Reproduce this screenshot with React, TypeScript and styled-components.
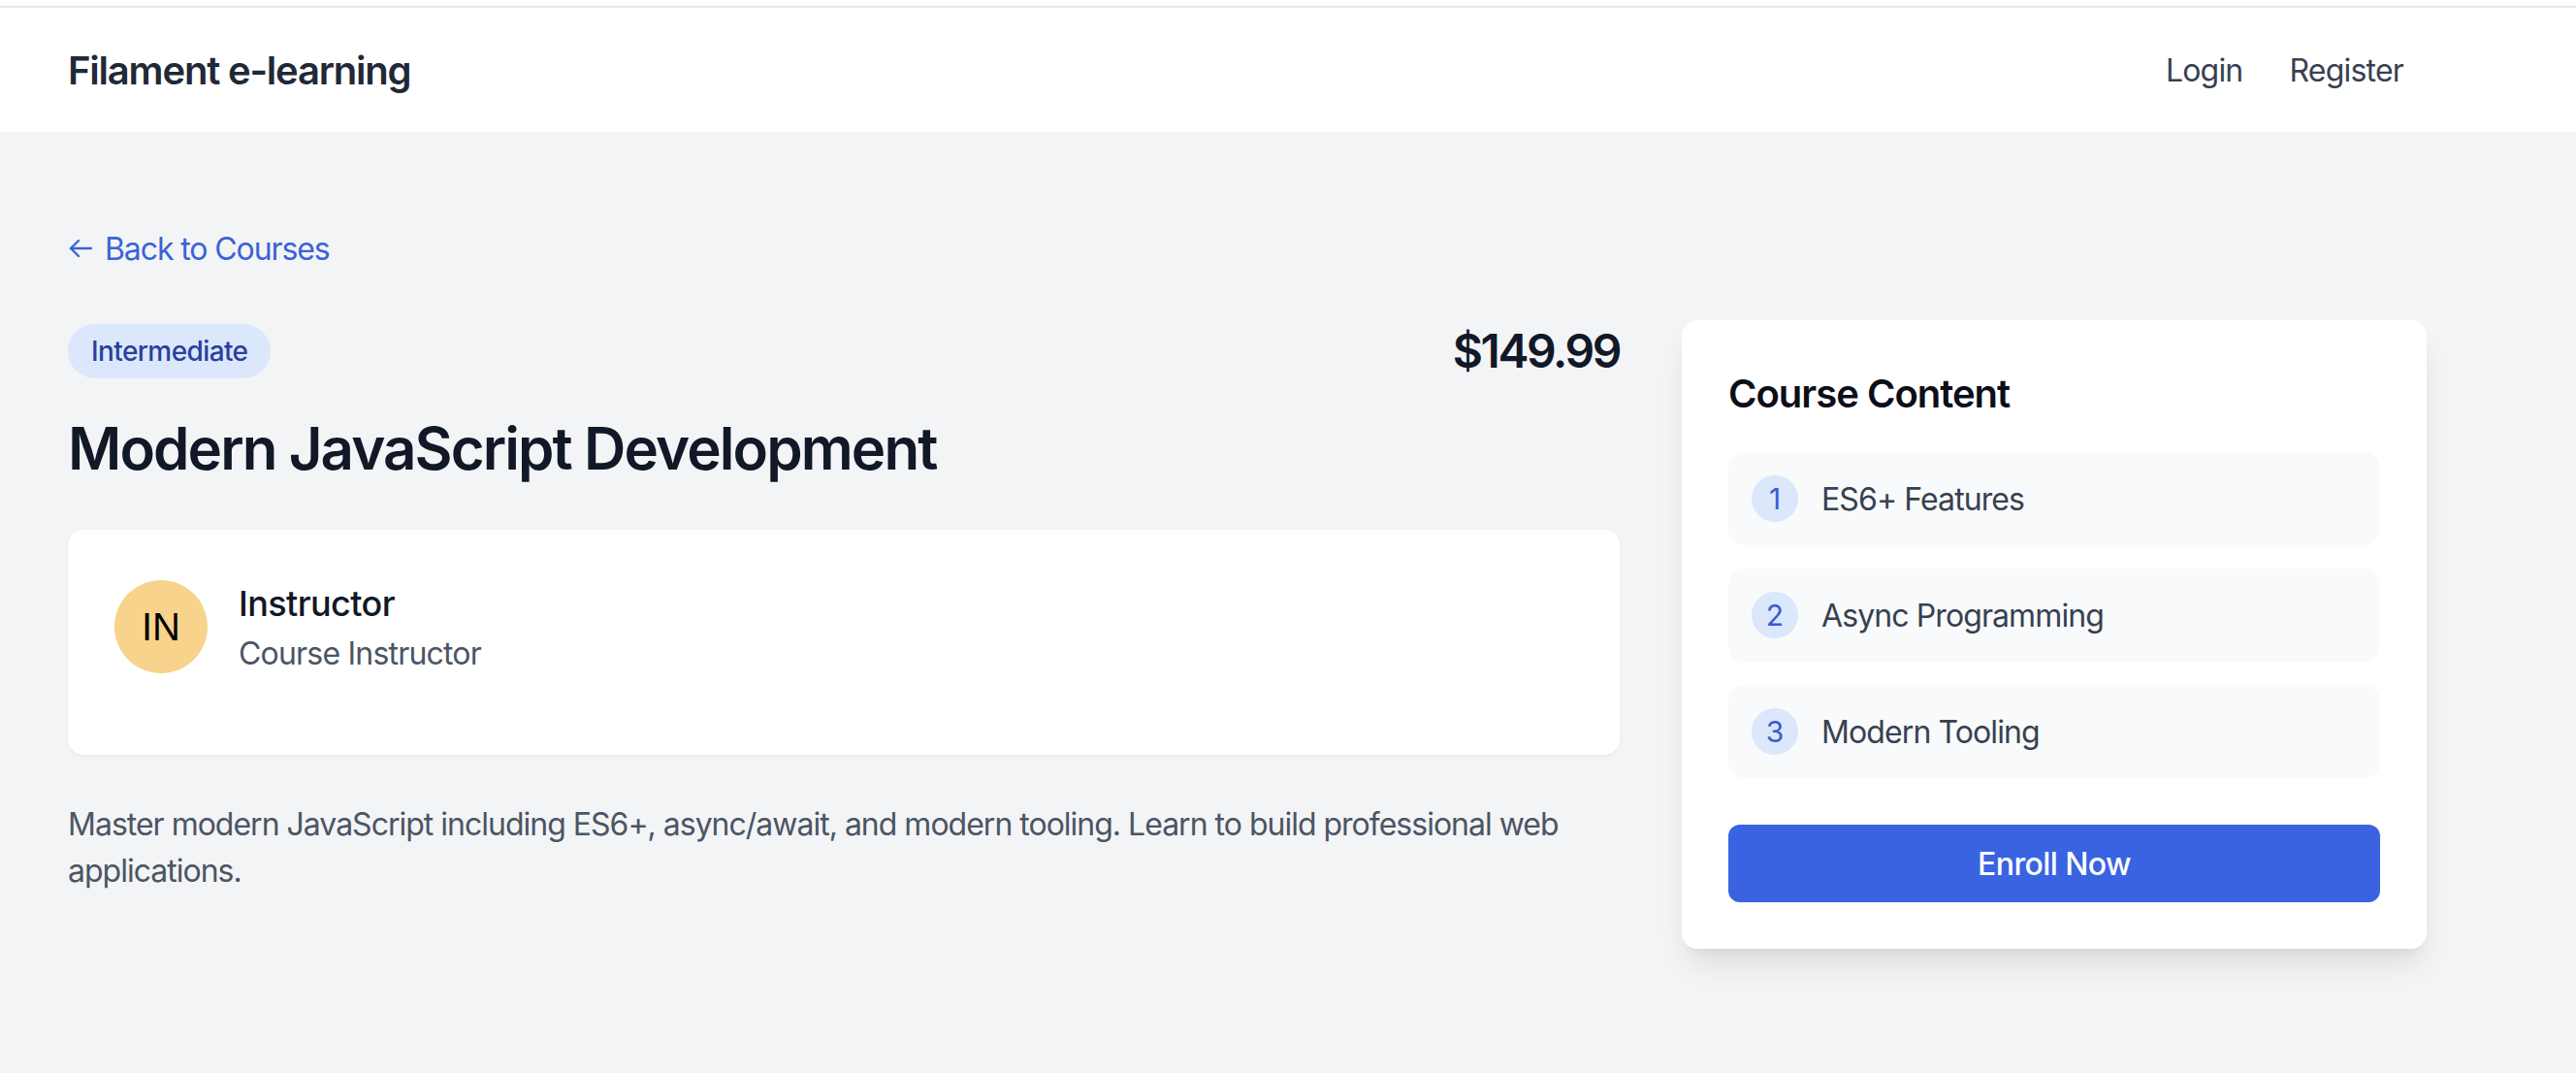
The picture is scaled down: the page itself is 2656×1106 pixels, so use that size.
import React from "react";
import styled, { createGlobalStyle } from "styled-components";

const GlobalStyle = createGlobalStyle`
  * { box-sizing: border-box; }
  html, body { margin: 0; padding: 0; }
  body {
    background: #f3f4f6;
    font-family: Inter, "Noto Sans", "Liberation Sans", sans-serif;
    color: #111827;
  }
`;

const TopStrip = styled.div`
  height: 8px;
  background: #ffffff;
  border-bottom: 2px solid #e5e7eb;
`;

const Header = styled.header`
  background: #ffffff;
  height: 128px;
`;

const Container = styled.div`
  width: 2432px;
  margin-left: 70px;
`;

const HeaderInner = styled(Container)`
  height: 100%;
  display: flex;
  align-items: center;
  justify-content: space-between;
`;

const Brand = styled.div`
  font-size: 40px;
  font-weight: 600;
  color: #1f2937;
  letter-spacing: -1.2px;
`;

const Nav = styled.nav`
  display: flex;
  align-items: center;
`;

const NavLink = styled.a`
  padding: 0 24px;
  font-size: 32px;
  color: #374151;
  text-decoration: none;
  letter-spacing: -0.8px;
`;

const Main = styled.main`
  padding-top: 96px;
  padding-bottom: 96px;
`;

const BackLink = styled.a`
  display: inline-flex;
  align-items: center;
  gap: 12px;
  height: 48px;
  font-size: 32px;
  color: #3d62d6;
  text-decoration: none;
  margin-bottom: 50px;
  letter-spacing: -1.1px;
`;

const Grid = styled.div`
  display: grid;
  grid-template-columns: repeat(3, 1fr);
  column-gap: 64px;
  align-items: start;
`;

const LeftCol = styled.div`
  grid-column: span 2;
`;

const MetaRow = styled.div`
  display: flex;
  align-items: center;
  justify-content: space-between;
  height: 64px;
`;

const Badge = styled.span`
  display: inline-flex;
  align-items: center;
  height: 56px;
  padding: 0 24px;
  border-radius: 9999px;
  background: #dbe7fb;
  color: #2a3f9d;
  font-size: 28px;
  font-weight: 500;
  letter-spacing: -0.6px;
`;

const Price = styled.div`
  font-size: 48px;
  font-weight: 600;
  line-height: 64px;
  color: #111827;
  letter-spacing: -2.4px;
`;

const Title = styled.h1`
  margin: 32px 0 0;
  font-size: 60px;
  line-height: 72px;
  font-weight: 600;
  color: #111827;
  letter-spacing: -1.9px;
`;

const Card = styled.div`
  background: #ffffff;
  border-radius: 16px;
  box-shadow: 0 1px 3px rgba(0, 0, 0, 0.06);
`;

const InstructorCard = styled(Card)`
  margin-top: 48px;
  padding: 48px;
`;

const InstructorRow = styled.div`
  display: flex;
  align-items: center;
  gap: 32px;
`;

const Avatar = styled.div`
  width: 96px;
  height: 96px;
  border-radius: 50%;
  background: #f7d38c;
  color: #000000;
  display: flex;
  align-items: center;
  justify-content: center;
  font-family: "Liberation Sans", Arial, sans-serif;
  font-size: 40px;
  flex-shrink: 0;
`;

const InstructorName = styled.div`
  font-size: 36px;
  line-height: 56px;
  font-weight: 500;
  color: #111827;
  letter-spacing: -0.6px;
`;

const InstructorRole = styled.div`
  font-size: 32px;
  line-height: 48px;
  color: #4b5563;
  letter-spacing: -0.8px;
`;

const Spacer = styled.div<{ $h: number }>`
  height: ${(p) => p.$h}px;
`;

const Description = styled.p`
  margin: 48px 0 0;
  font-size: 32px;
  line-height: 48px;
  color: #4b5563;
  letter-spacing: -1px;
`;

const SideCard = styled(Card)`
  padding: 48px;
  box-shadow: 0 20px 30px -6px rgba(0, 0, 0, 0.1), 0 8px 12px -8px rgba(0, 0, 0, 0.08);
`;

const SideTitle = styled.h2`
  margin: 0 0 32px;
  font-size: 40px;
  line-height: 56px;
  font-weight: 600;
  color: #0b0f19;
  letter-spacing: -1px;
`;

const LessonList = styled.div`
  display: flex;
  flex-direction: column;
  gap: 24px;
`;

const Lesson = styled.div`
  display: flex;
  align-items: center;
  padding: 24px;
  background: #f9fafb;
  border-radius: 16px;
`;

const LessonNum = styled.span`
  width: 48px;
  height: 48px;
  border-radius: 50%;
  background: #dbe7fb;
  color: #3a5bd0;
  font-size: 30px;
  display: flex;
  align-items: center;
  justify-content: center;
  margin-right: 24px;
  flex-shrink: 0;
`;

const LessonTitle = styled.span`
  font-size: 32px;
  color: #374151;
  letter-spacing: -0.9px;
`;

const EnrollButton = styled.button`
  margin-top: 48px;
  width: 100%;
  height: 80px;
  border: none;
  border-radius: 12px;
  background: #3963e1;
  color: #ffffff;
  font-family: inherit;
  font-size: 32px;
  font-weight: 500;
  letter-spacing: -0.6px;
  cursor: pointer;
`;

const lessons = ["ES6+ Features", "Async Programming", "Modern Tooling"];

const ArrowLeft = () => (
  <svg width="26" height="22" viewBox="0 0 26 22" fill="none" stroke="currentColor" strokeWidth="2.4" strokeLinecap="round" strokeLinejoin="round">
    <path d="M24 11H3" />
    <path d="M11 3L3 11L11 19" />
  </svg>
);

export default function App() {
  return (
    <>
      <GlobalStyle />
      <TopStrip />
      <Header>
        <HeaderInner>
          <Brand>Filament e-learning</Brand>
          <Nav>
            <NavLink href="#">Login</NavLink>
            <NavLink href="#">Register</NavLink>
          </Nav>
        </HeaderInner>
      </Header>
      <Main>
        <Container>
          <BackLink href="#">
            <ArrowLeft />
            <span>Back to Courses</span>
          </BackLink>
          <Grid>
            <LeftCol>
              <MetaRow>
                <Badge>Intermediate</Badge>
                <Price>$149.99</Price>
              </MetaRow>
              <Title>Modern JavaScript Development</Title>
              <InstructorCard>
                <InstructorRow>
                  <Avatar>IN</Avatar>
                  <div>
                    <InstructorName>Instructor</InstructorName>
                    <InstructorRole>Course Instructor</InstructorRole>
                  </div>
                </InstructorRow>
                <Spacer $h={32} />
              </InstructorCard>
              <Description>
                Master modern JavaScript including ES6+, async/await, and modern tooling. Learn to build professional web applications.
              </Description>
            </LeftCol>
            <SideCard>
              <SideTitle>Course Content</SideTitle>
              <LessonList>
                {lessons.map((l, i) => (
                  <Lesson key={l}>
                    <LessonNum>{i + 1}</LessonNum>
                    <LessonTitle>{l}</LessonTitle>
                  </Lesson>
                ))}
              </LessonList>
              <EnrollButton>Enroll Now</EnrollButton>
            </SideCard>
          </Grid>
        </Container>
      </Main>
    </>
  );
}
